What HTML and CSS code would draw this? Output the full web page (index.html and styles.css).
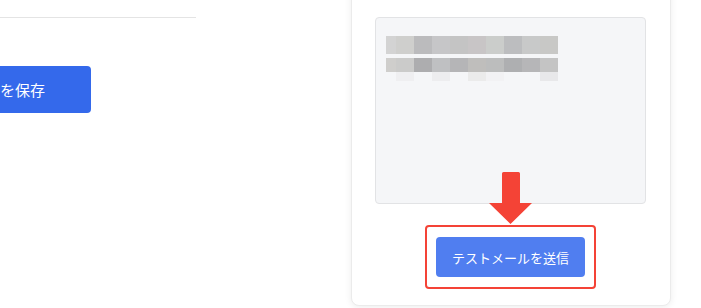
FILE: index.html
```html
<!DOCTYPE html>
<html lang="ja">
<head>
<meta charset="utf-8">
<link rel="stylesheet" href="styles.css">
</head>
<body>
<div class="page">
  <div class="left">
    <div class="divider"></div>
    <button class="save-btn">設定を保存</button>
  </div>
  <div class="card">
    <div class="preview">
      <div class="px-row row1"></div>
      <div class="px-row row2"></div>
      <div class="px-row row3"></div>
    </div>
    <div class="highlight">
      <svg class="arrow" width="43" height="52" viewBox="0 0 43 52" aria-hidden="true">
        <path d="M13 1.5 Q13 0 14.5 0 H29.5 Q31 0 31 1.5 V31 H43 L21.5 52 L0 31 H13 Z" fill="#f44336"/>
      </svg>
      <button class="send-btn">テストメールを送信</button>
    </div>
  </div>
</div>
</body>
</html>
```

FILE: styles.css
```css
* { box-sizing: border-box; }
html, body {
  margin: 0;
  padding: 0;
  background: #ffffff;
  overflow: hidden;
  height: 308px;
}
body {
  font-family: "Noto Sans CJK JP", "Noto Sans", sans-serif;
}
.page {
  display: flex;
  align-items: flex-start;
}
.left {
  width: 351px;
  flex: none;
  padding-top: 17px;
}
.divider {
  width: 196px;
  height: 1px;
  background: #e4e4e4;
}
.save-btn {
  display: block;
  margin-top: 48px;
  margin-left: -76px;
  width: 167px;
  height: 47px;
  border: none;
  border-radius: 4px;
  background: #3469eb;
  color: #ffffff;
  font-family: inherit;
  font-size: 15px;
  text-align: center;
  padding: 0;
  white-space: nowrap;
}
.card {
  width: 320px;
  flex: none;
  margin-top: -20px;
  padding: 36px 24px 16px 23px;
  border: 1px solid #ebebeb;
  border-radius: 8px;
  box-shadow: 0 1px 7px rgba(0, 0, 0, 0.08);
  background: #fff;
  display: flex;
  flex-direction: column;
  align-items: center;
}
.preview {
  width: 271px;
  height: 187px;
  background: #f5f6f8;
  border: 1px solid #e2e3e5;
  border-radius: 4px;
  padding: 18px 10px;
  display: flex;
  flex-direction: column;
}
.px-row { width: 172px; flex: none; }
.row1 {
  height: 18px;
  background: linear-gradient(to right,
    #d3d3d3 0 10px, #cfcfcd 10px 28px, #bbbbbd 28px 46px, #c6c6c8 46px 64px,
    #c4c4c4 64px 82px, #c8c5c6 82px 100px, #cbcdcb 100px 118px, #bcbdbf 118px 136px,
    #c8c9c9 136px 154px, #c8c8c6 154px 172px);
}
.row2 {
  margin-top: 4px;
  height: 14px;
  background: linear-gradient(to right,
    #cfcecc 0 10px, #cbcbca 10px 28px, #adadaf 28px 46px, #bfc0c2 46px 64px,
    #b5b5b7 64px 82px, #bfbebc 82px 100px, #bcbdbd 100px 118px, #aeafb1 118px 136px,
    #b6b6b8 136px 154px, #c4c4c4 154px 172px);
}
.row3 {
  height: 9px;
  background: linear-gradient(to right,
    transparent 0 10px, #efeff1 10px 28px, transparent 28px 46px, #ededef 46px 64px,
    transparent 64px 82px, #ebebeb 82px 100px, #f2f2f4 100px 118px, transparent 118px 154px,
    #e8e8ea 154px 172px);
}
.highlight {
  position: relative;
  margin-top: 21px;
  width: 171px;
  height: 64px;
  border: 2px solid #f44336;
  border-radius: 4px;
  padding: 10px 9px;
}
.arrow {
  position: absolute;
  top: -55px;
  left: 62px;
  display: block;
}
.send-btn {
  display: block;
  width: 149px;
  height: 40px;
  border: none;
  border-radius: 4px;
  background: #507ef0;
  color: #ffffff;
  font-family: inherit;
  font-size: 13px;
  padding: 0;
  text-align: center;
}
```
